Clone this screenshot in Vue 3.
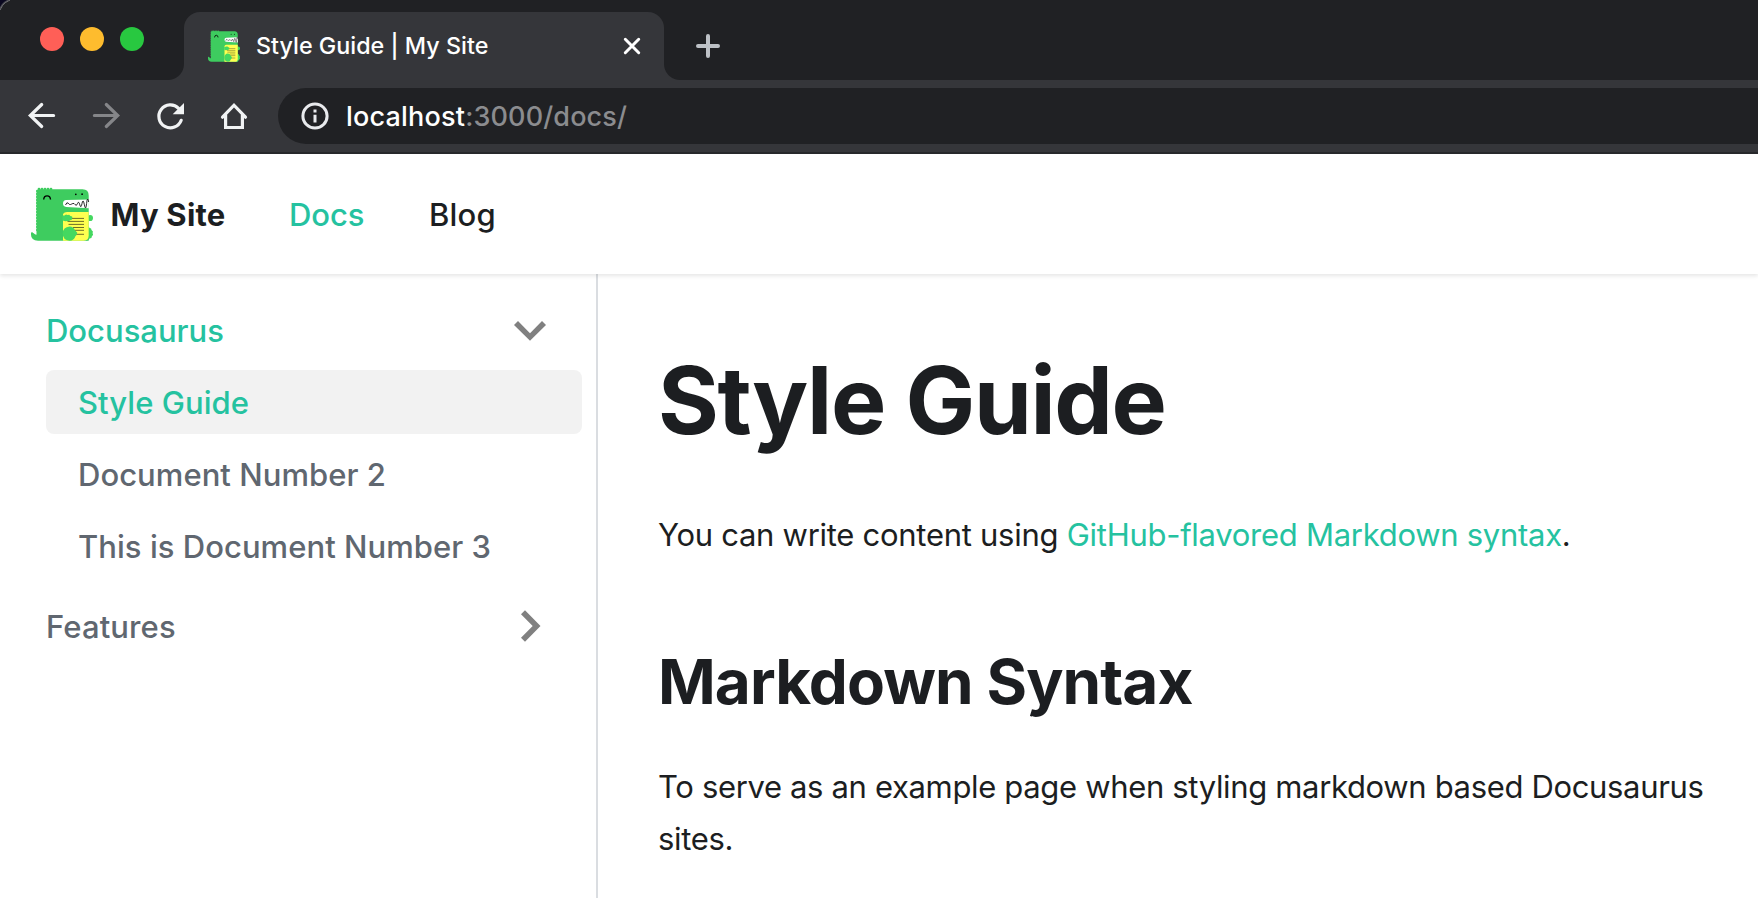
<script setup>
const lights = ['red', 'yellow', 'green']
const docs = [
  { label: 'Style Guide', active: true },
  { label: 'Document Number 2', active: false },
  { label: 'This is Document Number 3', active: false },
]
</script>

<template>
  <div class="window">
    <svg class="defs" width="0" height="0" aria-hidden="true">
      <symbol id="dino" viewBox="3 7 62 54" preserveAspectRatio="none">
        <ellipse cx="62.2" cy="38" rx="2.8" ry="3.1" fill="#44d860" />
        <path d="M58 46.5h2.5l1.2 1.4 1.4.6.4 1.6 1.4 1.4-.3 1.8.6 1.6-1.3 1.3-.5 1.7-1.8.7-1.2 1.5-2.4.4z" fill="#44d860" />
        <path d="M8.500 54.500V12.500Q8.500 9.200 11.500 9.200H54.500Q60.700 9.200 60.700 15.500V60.700H10Q3 60.500 3 54.800V53.500Q3 51.700 4.300 52.300L7 54.200Q8 55 8.500 54.500z" fill="#3ecc5f" />
        <path d="M9.300 11V53" fill="none" stroke="#3ecc5f" stroke-width="2.600" stroke-linecap="round" stroke-dasharray="0 3" />
        <path d="M11 9.200H26" fill="none" stroke="#3ecc5f" stroke-width="2.800" stroke-linecap="round" stroke-dasharray="0 3" />
        <path d="M35 60.700V34Q36.200 32 39 32H60.700V55.500Q60.700 60.700 55.500 60.700z" fill="#ffff50" />
        <path d="M60.800 19.400L38.200 20.100Q35 20.400 35 23.400T38.200 26.900L60.800 28.300z" fill="#fff" />
        <path d="M37.500 25Q39 21.500 40.200 23.200T42.500 24.500T44.800 23.500T47.200 24.700T49.500 23.500T51.800 24.800T54 23.500T56.400 24.800T58.600 23.500T60.700 22" fill="none" stroke="#111" stroke-width=".9" />
        <path d="M40.500 38.400H56M39.500 41.400H56M40.500 44.400H56M45 47.500H56M46 50.300H56M46 54.300H56" stroke="#4a4920" stroke-width=".8" />
        <path d="M34.500 35.500h2l1.500-1 1.500.6 1.700-.4 1.200 1.200 1.700.5.3 1.600-.6 1.700-1.700.5-1.200 1-1.700-.3-1.700.3-3-.7z" fill="#44d860" />
        <path d="M41.700 46.500Q45.500 46.800 46.800 50L49.300 52.800Q49 55.200 47.400 56.200Q46 60.500 41.500 60.700Q34.700 60.200 34.700 53.600Q34.900 47 41.700 46.500z" fill="#44d860" />
        <path d="M15.700 19.500Q15.900 15.900 19.100 15.900T22.500 19.500" fill="none" stroke="#000" stroke-width="1.400" />
        <circle cx="47.800" cy="14.300" r=".85" />
        <circle cx="54.100" cy="14.200" r=".85" />
      </symbol>
    </svg>

    <div class="tabstrip">
      <div class="lights">
        <span v-for="c in lights" :key="c" class="light" :class="c"></span>
      </div>
      <div class="tab">
        <svg class="favicon" viewBox="0 0 32 32"><use href="#dino" width="32" height="32" /></svg>
        <span class="tab-title">Style Guide | My Site</span>
        <svg class="close" viewBox="0 0 18 18"><path d="M2.300 2.300L15.700 15.700M15.700 2.300L2.300 15.700" /></svg>
      </div>
      <svg class="plus" viewBox="0 0 24 24"><path d="M12 2V22M2 12H22" /></svg>
    </div>

    <div class="toolbar">
      <svg class="tool" viewBox="0 0 32 32"><path d="M27.600 15.500H4.500M15.700 4.500L4.300 15.500L15.700 26.500" /></svg>
      <svg class="tool dim" viewBox="0 0 32 32"><path d="M4.400 15.500H27.500M16.300 4.500L27.700 15.500L16.300 26.500" /></svg>
      <svg class="tool" viewBox="0 0 32 32">
        <path d="M24.600 8.300A11.500 11.500 0 1 0 27.200 20.300" />
        <path class="solid" d="M30 3V14.300H18.700z" />
      </svg>
      <svg class="tool" viewBox="0 0 32 32">
        <path d="M4.500 17.200L16 5.200L27.500 17.200" />
        <path d="M7.600 15V27.500H24.400V15" />
      </svg>
      <div class="omnibox">
        <svg class="info" viewBox="0 0 28 28">
          <circle cx="14" cy="14" r="12.100" />
          <path d="M14 7.500V10.400M14 12.700V20.500" />
        </svg>
        <span class="url"><span class="host">localhost</span>:3000/docs/</span>
      </div>
    </div>

    <nav class="navbar">
      <svg class="logo" viewBox="0 0 62 54"><use href="#dino" width="62" height="54" /></svg>
      <span class="brand">My Site</span>
      <a class="nav-link docs">Docs</a>
      <a class="nav-link blog">Blog</a>
    </nav>

    <div class="page">
      <aside class="sidebar">
        <div class="category open">
          <span>Docusaurus</span>
          <svg class="chevron" viewBox="0 0 32 32"><path d="M0 11L4 7L16 19.300L28 7L32 11L16 26.700z" /></svg>
        </div>
        <ul class="items">
          <li v-for="d in docs" :key="d.label" class="item" :class="{ active: d.active }">{{ d.label }}</li>
        </ul>
        <div class="category">
          <span class="features">Features</span>
          <svg class="chevron" viewBox="0 0 32 32"><path d="M7 4.300L11 0.300L26.500 16L11 31.700L7 27.700L18.700 16z" /></svg>
        </div>
      </aside>
      <main class="content">
        <h1>Style Guide</h1>
        <p class="intro">You can write content using <a>GitHub-flavored Markdown syntax</a>.</p>
        <h2>Markdown Syntax</h2>
        <p class="about">To serve as an example page when styling markdown based Docusaurus sites.</p>
      </main>
    </div>
  </div>
</template>

<style>
body {
  margin: 0;
  background: #fff;
}
</style>

<style scoped>
.window {
  width: 1758px;
  height: 898px;
  overflow: hidden;
  display: flex;
  flex-direction: column;
  background: #fff;
  color: #1c1e21;
  font-family: Inter, "Liberation Sans", sans-serif;
  font-size: 31px;
}

.window * {
  box-sizing: border-box;
}

.defs {
  position: absolute;
}

svg {
  display: block;
  flex: none;
}

.tabstrip {
  flex: none;
  height: 80px;
  display: flex;
  align-items: flex-end;
  background:
    radial-gradient(circle at 14px 14px, transparent 13.5px, #6b6b70 14px, #4a4a50 15px, #0a0820 16px) 0 0 / 10px 10px no-repeat,
    #202124;
}

.lights {
  width: 184px;
  height: 80px;
  padding: 27px 0 0 40px;
  display: flex;
  gap: 16px;
}

.light {
  width: 24px;
  height: 24px;
  border-radius: 50%;
}

.red { background: #ff5f57; }
.yellow { background: #febc2e; }
.green { background: #28c840; }

.tab {
  position: relative;
  width: 480px;
  height: 68px;
  padding: 0 23px 0 24px;
  display: flex;
  align-items: center;
  background: #35363a;
  border-radius: 16px 16px 0 0;
}

.tab::before,
.tab::after {
  content: "";
  position: absolute;
  bottom: 0;
  width: 16px;
  height: 16px;
}

.tab::before {
  left: -16px;
  background: radial-gradient(circle at 0 0, transparent 15.5px, #35363a 16.5px);
}

.tab::after {
  right: -16px;
  background: radial-gradient(circle at 100% 0, transparent 15.5px, #35363a 16.5px);
}

.favicon {
  width: 32px;
  height: 32px;
}

.tab-title {
  flex: 1;
  margin-left: 16px;
  padding-bottom: 2px;
  font-size: 23.3px;
  font-weight: 500;
  letter-spacing: 0.02px;
  color: #fff;
  white-space: nowrap;
}

.close {
  width: 18px;
  height: 18px;
  fill: none;
  stroke: #fff;
  stroke-width: 3;
  stroke-linecap: round;
}

.plus {
  width: 24px;
  height: 24px;
  margin: 0 0 22px 32px;
  fill: none;
  stroke: #bdc1c6;
  stroke-width: 4;
  stroke-linecap: round;
}

.toolbar {
  flex: none;
  height: 74px;
  padding: 8px 0 8px 26px;
  display: flex;
  align-items: center;
  background: #35363a;
  border-bottom: 2px solid #28292c;
}

.tool {
  width: 32px;
  height: 32px;
  margin-right: 32px;
  fill: none;
  stroke: #f1f3f4;
  stroke-width: 3.2;
  stroke-linecap: round;
}

.tool.dim {
  stroke: #858689;
}

.tool .solid {
  fill: #f1f3f4;
  stroke: none;
}

.omnibox {
  flex: 1;
  height: 56px;
  margin-left: -4px;
  padding-left: 22.5px;
  display: flex;
  align-items: center;
  background: #202124;
  border-radius: 28px 0 0 28px;
}

.info {
  width: 28px;
  height: 28px;
  fill: none;
  stroke: #e8eaed;
  stroke-width: 3;
}

.url {
  margin-left: 17.5px;
  font-size: 27px;
  font-weight: 500;
  letter-spacing: 0.13px;
  color: #8b8c8f;
  white-space: nowrap;
}

.host {
  letter-spacing: 0.2px;
  color: #fff;
}

.navbar {
  position: relative;
  z-index: 1;
  flex: none;
  height: 120px;
  padding-left: 31px;
  display: flex;
  align-items: center;
  background: #fff;
  box-shadow: 0 2px 4px rgba(0, 0, 0, 0.1);
}

.logo {
  width: 62px;
  height: 54px;
}

.brand {
  width: 178.5px;
  margin-left: 17.5px;
  font-weight: 700;
  letter-spacing: 0.22px;
}

.nav-link {
  font-weight: 500;
}

.docs {
  width: 140px;
  letter-spacing: -0.1px;
  color: #25c2a0;
}

.blog {
  letter-spacing: 0.2px;
}

.page {
  flex: 1;
  min-height: 0;
  display: flex;
}

.sidebar {
  flex: none;
  width: 598px;
  padding: 24px 14px 0 46px;
  border-right: 2px solid #dadde1;
  font-weight: 500;
  color: #606770;
}

.category {
  height: 64px;
  padding-right: 36px;
  display: flex;
  align-items: center;
  justify-content: space-between;
}

.category span {
  padding-top: 1px;
}

.features {
  letter-spacing: 0.12px;
}

.category.open {
  color: #25c2a0;
}

.chevron {
  width: 32px;
  height: 32px;
  fill: #808080;
}

.items {
  margin: 8px 0 16px;
  padding: 0;
  list-style: none;
  display: flex;
  flex-direction: column;
  gap: 8px;
  letter-spacing: 0.045px;
}

.item {
  height: 64px;
  padding: 1px 0 0 32px;
  display: flex;
  align-items: center;
  border-radius: 8px;
}

.item.active {
  background: #f2f2f2;
  color: #25c2a0;
}

.content {
  flex: 1;
  min-width: 0;
  padding: 66px 0 0 60px;
}

h1 {
  margin: 0 0 49px;
  font-size: 93px;
  line-height: 120px;
  font-weight: 700;
  letter-spacing: -1.376px;
}

h2 {
  margin: 0 0 39px;
  font-size: 62px;
  line-height: 80px;
  font-weight: 700;
  letter-spacing: -0.923px;
}

p {
  margin: 0;
  line-height: 52px;
}

.intro {
  margin-bottom: 81px;
  letter-spacing: -0.275px;
}

.intro a {
  color: #25c2a0;
}

.about {
  letter-spacing: -0.34px;
}
</style>
